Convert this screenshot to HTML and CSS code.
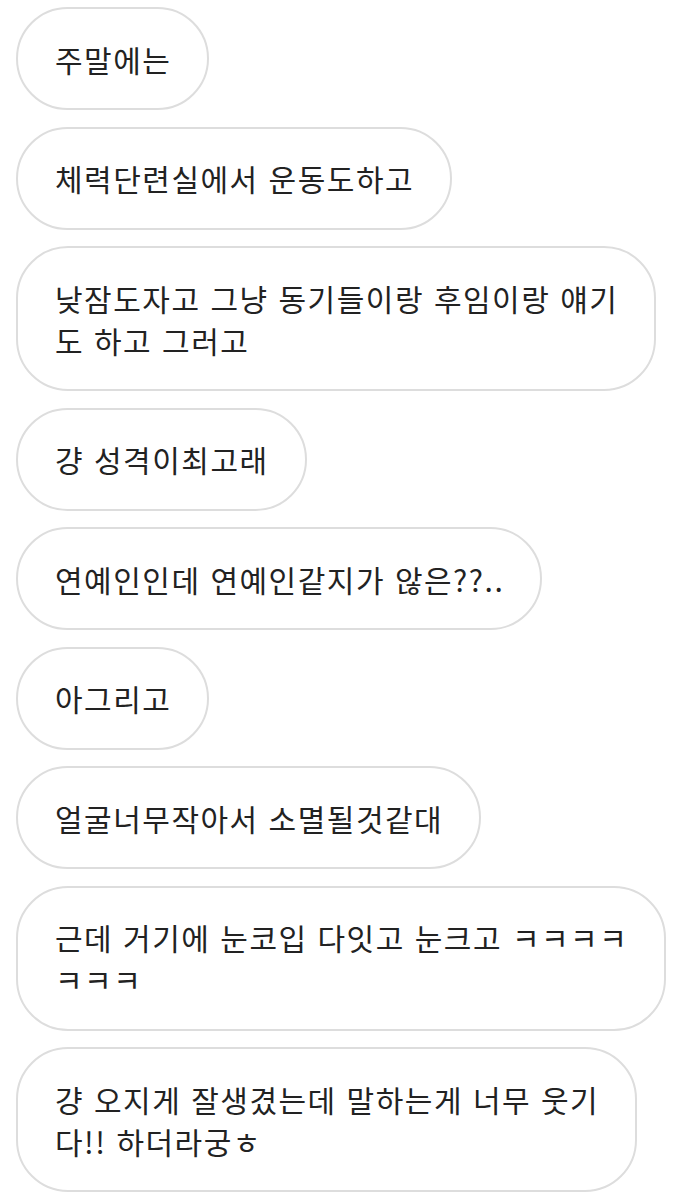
FILE: index.html
```html
<!DOCTYPE html>
<html lang="ko">
<head>
<meta charset="utf-8">
<link rel="stylesheet" href="styles.css">
</head>
<body>
<div class="chat">
  <div class="bubble">주말에는</div>
  <div class="bubble">체력단련실에서 운동도하고</div>
  <div class="bubble">낮잠도자고 그냥 동기들이랑 후임이랑 얘기<br>도 하고 그러고</div>
  <div class="bubble">걍 성격이최고래</div>
  <div class="bubble">연예인인데 연예인같지가 않은??..</div>
  <div class="bubble">아그리고</div>
  <div class="bubble">얼굴너무작아서 소멸될것같대</div>
  <div class="bubble">근데 거기에 눈코입 다잇고 눈크고 ㅋㅋㅋㅋ<br>ㅋㅋㅋ</div>
  <div class="bubble">걍 오지게 잘생겼는데 말하는게 너무 웃기<br>다!! 하더라궁ㅎ</div>
</div>
</body>
</html>
```

FILE: styles.css
```css
html, body {
  margin: 0;
  padding: 0;
  background: #ffffff;
}

.chat {
  display: flex;
  flex-direction: column;
  align-items: flex-start;
  gap: 16.5px;
  padding: 7px 0 0 16px;
}

.bubble {
  box-sizing: border-box;
  border: 2px solid #dddddd;
  border-radius: 52px;
  background: #ffffff;
  padding: 28.5px 36px 28.5px 37px;
  font-family: "Noto Sans CJK KR", "Noto Sans", sans-serif;
  font-size: 30px;
  line-height: 42px;
  letter-spacing: 1.5px;
  color: #222222;
  white-space: nowrap;
}
```
